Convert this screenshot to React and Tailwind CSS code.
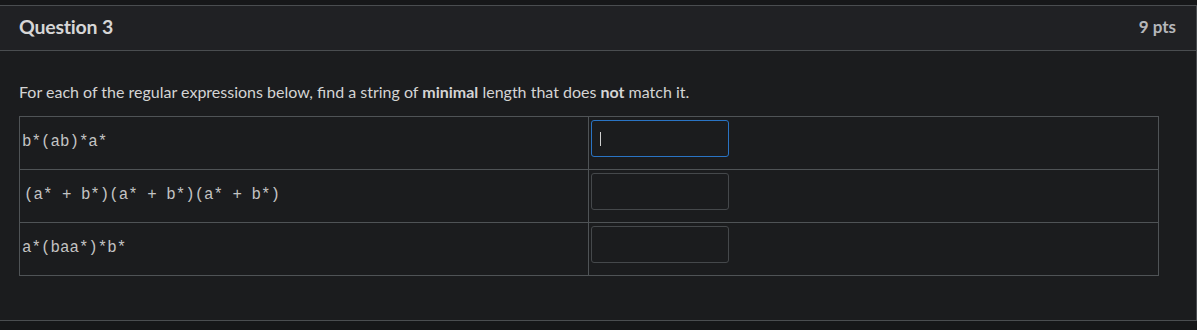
import React from "react";

const rows = [
  { expr: "b*(ab)*a*", pad: "pl-[2px]", focused: true },
  { expr: "(a* + b*)(a* + b*)(a* + b*)", pad: "pl-[4px]", focused: false },
  { expr: "a*(baa*)*b*", pad: "pl-[2px]", focused: false },
];

export default function App() {
  return (
    <div className="w-[1197px] h-[330px] bg-[#161719] pt-[5px] overflow-hidden" style={{ fontFamily: "Lato, 'Noto Sans', sans-serif" }}>
      <div className="h-[316px] bg-[#1b1c1e] border-t border-b border-r border-[#4a4d50] w-[1197px]">
        {/* header */}
        <div className="h-[45px] bg-[#202124] border-b border-[#4a4d50] flex items-center justify-between pl-[19px] pr-[20px]">
          <h2 className="text-[19.5px] font-bold text-[#d6d6d6] leading-[24px] -mt-[2px] tracking-[-0.2px]">Question 3</h2>
          <span className="text-[17px] font-bold text-[#b5b7ba] leading-[22px] -mt-[2px]">9 pts</span>
        </div>

        {/* body */}
        <div className="pl-[19px] pr-[37px] pt-[30px]">
          <p className="text-[16px] text-[#d4d4d4] leading-[21px] mb-[14px]">
            For each of the regular expressions below, find a string of <strong className="font-bold">minimal</strong> length that does <strong className="font-bold">not</strong> match it.
          </p>
          <table className="border-collapse w-[1140px]">
            <tbody>
              {rows.map((row, i) => (
                <tr key={i} className="h-[53px]">
                  <td className={`border border-[#4f5356] w-[569px] ${row.pad} text-[15.8px] text-[#c4c4c4] align-middle whitespace-pre`} style={{ fontFamily: "'Liberation Mono', 'DejaVu Sans Mono', monospace" }}>
                    {row.expr}
                  </td>
                  <td className="border border-[#4f5356] pl-[2px] pt-[3px] pb-[12px] align-top">
                    <div
                      className={`w-[138px] h-[37px] rounded-[3px] border flex items-center pl-[8px] ${
                        row.focused ? "border-[#2a74c4]" : "border-[#45484b]"
                      }`}
                    >
                      {row.focused && <span className="w-px h-[14px] bg-[#d0d0d0]" />}
                    </div>
                  </td>
                </tr>
              ))}
            </tbody>
          </table>
        </div>
      </div>
    </div>
  );
}
